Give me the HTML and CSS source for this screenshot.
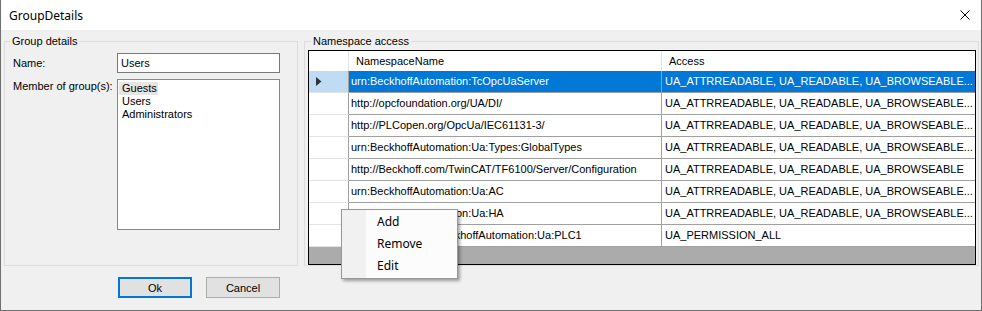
FILE: index.html
```html
<!DOCTYPE html>
<html lang="en">
<head>
    <meta charset="UTF-8">
    <title>GroupDetails</title>
    <link rel="stylesheet" href="styles.css">
</head>
<body>
    <div class="window">
        <div class="titlebar">
            <span class="title">GroupDetails</span>
            <svg class="close" width="10" height="10" viewBox="0 0 10 10">
                <path d="M0.5 0.5 L9.5 9.5 M9.5 0.5 L0.5 9.5" stroke="#000" stroke-width="1" fill="none"/>
            </svg>
        </div>

        <div class="content">
            <div class="left-col">
                <fieldset class="group group-left">
                    <legend>Group details</legend>
                    <div class="details">
                        <label class="field-label" for="name">Name:</label>
                        <div class="textbox" id="name">Users</div>
                        <label class="field-label member-label">Member of group(s):</label>
                        <div class="listbox">
                            <div class="list-item selected">Guests</div>
                            <div class="list-item">Users</div>
                            <div class="list-item">Administrators</div>
                        </div>
                    </div>
                </fieldset>
                <div class="buttons">
                    <button class="btn btn-default">Ok</button>
                    <button class="btn">Cancel</button>
                </div>
            </div>

            <fieldset class="group group-right">
                <legend>Namespace access</legend>
                <div class="grid">
                    <div class="grid-row grid-head">
                        <div class="cell rowhead"></div>
                        <div class="cell col-name">NamespaceName</div>
                        <div class="cell col-access">Access</div>
                    </div>
                    <div class="grid-row current">
                        <div class="cell rowhead">
                            <svg width="6" height="9" viewBox="0 0 6 9"><path d="M0 0 L5.5 4.5 L0 9 Z" fill="#333"/></svg>
                        </div>
                        <div class="cell col-name">urn:BeckhoffAutomation:TcOpcUaServer</div>
                        <div class="cell col-access">UA_ATTRREADABLE, UA_READABLE, UA_BROWSEABLE...</div>
                    </div>
                    <div class="grid-row">
                        <div class="cell rowhead"></div>
                        <div class="cell col-name">http://opcfoundation.org/UA/DI/</div>
                        <div class="cell col-access">UA_ATTRREADABLE, UA_READABLE, UA_BROWSEABLE...</div>
                    </div>
                    <div class="grid-row">
                        <div class="cell rowhead"></div>
                        <div class="cell col-name">http://PLCopen.org/OpcUa/IEC61131-3/</div>
                        <div class="cell col-access">UA_ATTRREADABLE, UA_READABLE, UA_BROWSEABLE...</div>
                    </div>
                    <div class="grid-row">
                        <div class="cell rowhead"></div>
                        <div class="cell col-name">urn:BeckhoffAutomation:Ua:Types:GlobalTypes</div>
                        <div class="cell col-access">UA_ATTRREADABLE, UA_READABLE, UA_BROWSEABLE...</div>
                    </div>
                    <div class="grid-row">
                        <div class="cell rowhead"></div>
                        <div class="cell col-name">http://Beckhoff.com/TwinCAT/TF6100/Server/Configuration</div>
                        <div class="cell col-access">UA_ATTRREADABLE, UA_READABLE, UA_BROWSEABLE</div>
                    </div>
                    <div class="grid-row">
                        <div class="cell rowhead"></div>
                        <div class="cell col-name">urn:BeckhoffAutomation:Ua:AC</div>
                        <div class="cell col-access">UA_ATTRREADABLE, UA_READABLE, UA_BROWSEABLE...</div>
                    </div>
                    <div class="grid-row">
                        <div class="cell rowhead"></div>
                        <div class="cell col-name">urn:BeckhoffAutomation:Ua:HA</div>
                        <div class="cell col-access">UA_ATTRREADABLE, UA_READABLE, UA_BROWSEABLE...</div>
                    </div>
                    <div class="grid-row">
                        <div class="cell rowhead"></div>
                        <div class="cell col-name">urn:TwinCAT:Tc3:BeckhoffAutomation:Ua:PLC1</div>
                        <div class="cell col-access">UA_PERMISSION_ALL</div>
                    </div>
                    <div class="grid-empty"></div>
                </div>
            </fieldset>
        </div>

        <div class="context-menu">
            <div class="menu-item">Add</div>
            <div class="menu-item">Remove</div>
            <div class="menu-item">Edit</div>
        </div>
    </div>
</body>
</html>
```

FILE: styles.css
```css
body {
    margin: 0;
    padding: 0;
    background: #f0f0f0;
    font-family: "Liberation Sans", Arial, sans-serif;
    font-size: 11px;
    color: #000;
}

.window {
    position: relative;
    width: 982px;
    height: 311px;
    box-sizing: border-box;
    border: 1px solid #6f6f6f;
    border-top: none;
    background: #f0f0f0;
    display: flex;
    flex-direction: column;
    overflow: hidden;
}

.titlebar {
    height: 30px;
    flex-shrink: 0;
    background: #fff;
    display: flex;
    align-items: center;
    justify-content: space-between;
    padding: 0 11px 0 8px;
}

.title {
    font-family: "Noto Sans", sans-serif;
    font-size: 12px;
    margin-top: 1px;
}

.close {
    display: block;
    margin-top: -1px;
}

.content {
    display: flex;
    gap: 6px;
    padding: 5px 2px 0 3px;
}

/* group boxes */
.group {
    margin: 0;
    padding: 0;
    min-width: 0;
    box-sizing: border-box;
    height: 231px;
    border: 1px solid #dcdcdc;
}

.group legend {
    font-size: 11px;
    line-height: 13px;
    padding: 0 2px;
}

.group-left {
    width: 294px;
}

.group-left legend {
    margin-left: 5px;
}

.group-right {
    width: 675px;
    padding: 2px 2px 0 3px;
}

.group-right legend {
    margin-left: 3px;
}

.details {
    display: grid;
    grid-template-columns: 104px 163px;
    row-gap: 6px;
    padding: 5px 0 0 8px;
}

.field-label {
    line-height: 20px;
}

.member-label {
    line-height: 13px;
    padding-top: 1px;
}

.textbox {
    height: 20px;
    box-sizing: border-box;
    border: 1px solid #7a7a7a;
    background: #fff;
    line-height: 18px;
    padding-left: 3px;
}

.listbox {
    height: 151px;
    box-sizing: border-box;
    border: 1px solid #828790;
    background: #fff;
    padding: 2px 0 0 1px;
}

.list-item {
    line-height: 13px;
    padding-left: 3px;
}

.list-item.selected {
    display: inline-block;
    background: #e5e5e5;
    padding-right: 1px;
}

/* buttons */
.buttons {
    display: flex;
    gap: 14px;
    margin: 11px 0 0 114px;
}

.btn {
    width: 74px;
    height: 21px;
    box-sizing: border-box;
    border: 1px solid #adadad;
    background: #e1e1e1;
    font-family: "Liberation Sans", Arial, sans-serif;
    font-size: 11px;
    color: #000;
    padding: 0;
}

.btn-default {
    border: 2px solid #0078d7;
}

/* data grid */
.grid {
    border: 1px solid #000;
    height: 215px;
    box-sizing: border-box;
    background: #ababab;
    display: flex;
    flex-direction: column;
}

.grid-row {
    display: grid;
    grid-template-columns: 40px 313px 1fr;
    height: 22px;
    background: #fff;
}

.grid-head {
    height: 20px;
}

.cell {
    box-sizing: border-box;
    border-right: 1px solid #a0a0a0;
    border-bottom: 1px solid #a0a0a0;
    white-space: nowrap;
    overflow: hidden;
    line-height: 21px;
}

.cell:last-child {
    border-right: none;
}

.grid-head .cell {
    border-bottom: none;
    border-right-color: #e3e3e3;
    line-height: 20px;
    padding-left: 7px;
}

.rowhead {
    border-bottom-color: #e3e3e3;
    display: flex;
    align-items: center;
    padding-left: 7px;
}

.col-name {
    padding-left: 2px;
}

.col-access {
    padding-left: 3px;
}

.current .rowhead {
    background: #bfdcf4;
}

.current .col-name,
.current .col-access {
    background: #0078d7;
    color: #fff;
}

.grid-empty {
    flex: 1;
}

/* context menu */
.context-menu {
    position: absolute;
    left: 340px;
    top: 209px;
    width: 117px;
    height: 70px;
    box-sizing: border-box;
    border: 1px solid #979797;
    background: linear-gradient(to right, #f1f1f1 0, #f1f1f1 24px, #fcfcfc 24px);
    box-shadow: 2px 2px 3px rgba(0, 0, 0, 0.35);
    padding: 1px 0;
    font-family: "Noto Sans", sans-serif;
    font-size: 12px;
}

.menu-item {
    height: 22px;
    line-height: 22px;
    padding-left: 35px;
}
```
